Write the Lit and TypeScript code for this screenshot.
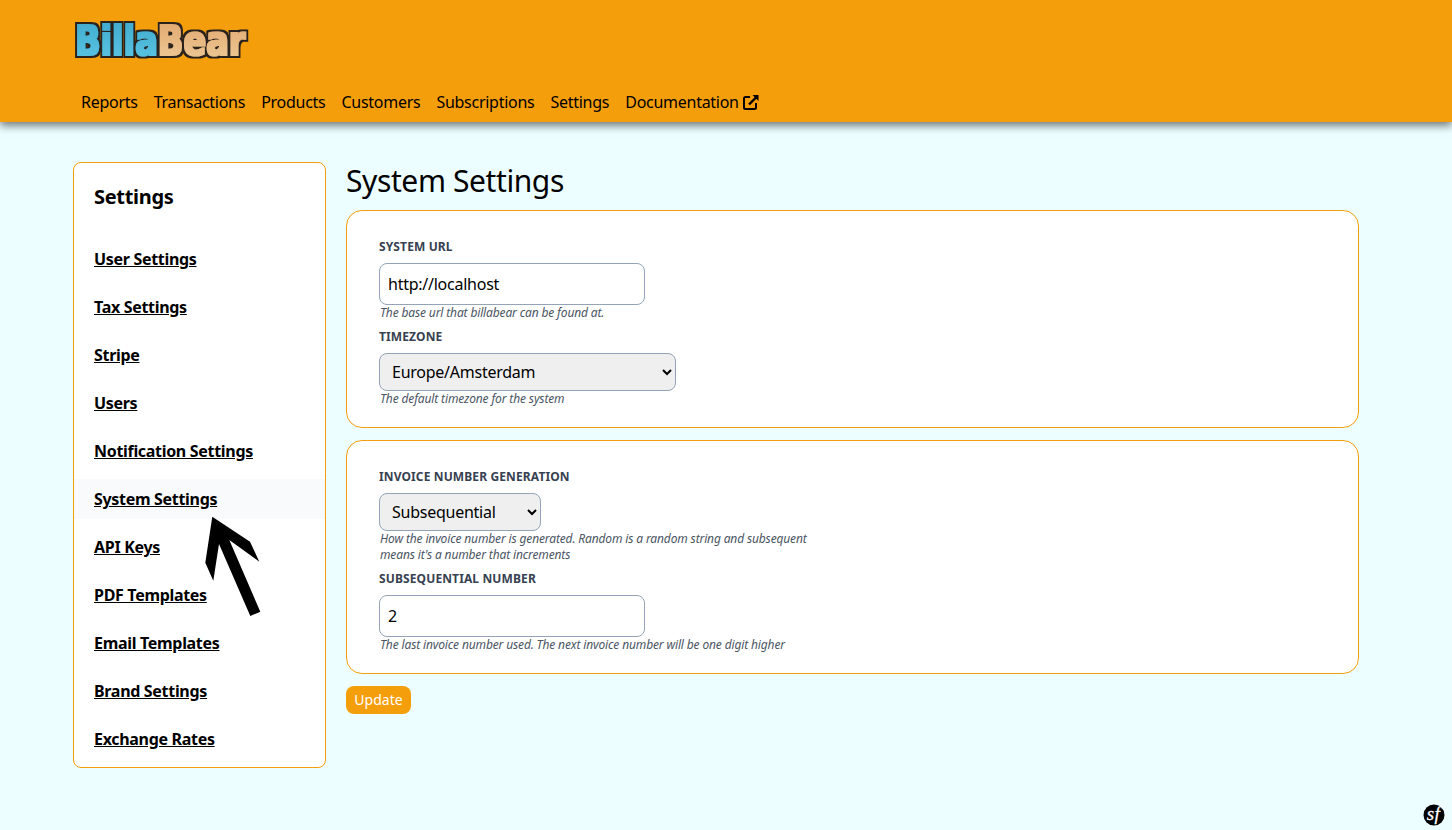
import { LitElement, html, css, svg } from "lit";
import { customElement } from "lit/decorators.js";

const NAV = ["Reports", "Transactions", "Products", "Customers", "Subscriptions", "Settings"];
const MENU = [
  "User Settings",
  "Tax Settings",
  "Stripe",
  "Users",
  "Notification Settings",
  "System Settings",
  "API Keys",
  "PDF Templates",
  "Email Templates",
  "Brand Settings",
  "Exchange Rates",
];

const logo = svg`
  <svg class="logo" width="184" height="50" viewBox="0 0 184 50">
    <defs>
      <linearGradient id="blue" x1="0" y1="0" x2="0" y2="1">
        <stop offset="0" stop-color="#3fa9cc" />
        <stop offset="1" stop-color="#5cc6e4" />
      </linearGradient>
      <linearGradient id="tan" x1="0" y1="0" x2="0" y2="1">
        <stop offset="0" stop-color="#e2a56c" />
        <stop offset="1" stop-color="#edcb98" />
      </linearGradient>
      <filter id="fat" filterUnits="userSpaceOnUse" x="0" y="0" width="184" height="50">
        <feMorphology in="SourceGraphic" operator="dilate" radius="0.6" result="body" />
        <feMorphology in="SourceAlpha" operator="dilate" radius="3" result="wide" />
        <feFlood flood-color="#2a211d" />
        <feComposite in2="wide" operator="in" result="line" />
        <feMerge>
          <feMergeNode in="line" />
          <feMergeNode in="body" />
        </feMerge>
      </filter>
    </defs>
    <g filter="url(#fat)">
      <text class="logo-text" transform="translate(2 39) scale(0.84 1)"><tspan fill="url(#blue)">Billa</tspan><tspan fill="url(#tan)">Bear</tspan></text>
    </g>
  </svg>
`;

@customElement("app-root")
export class AppRoot extends LitElement {
  static styles = css`
    :host {
      display: block;
      position: relative;
      min-height: 100vh;
      background: #ecfeff;
      font-family: "Noto Sans", sans-serif;
      color: #000;
      overflow: hidden;
    }
    .top {
      height: 122px;
      box-sizing: border-box;
      background: #f59e0b;
      padding: 16px 0 0 73px;
      box-shadow: 0 4px 8px 0 rgba(0, 0, 0, 0.5);
    }
    .logo {
      display: block;
    }
    .logo-text {
      font-family: "DejaVu Sans", sans-serif;
      font-weight: 700;
      font-size: 40px;
    }
    nav {
      display: flex;
      align-items: center;
      gap: 16px;
      margin: 24px 0 0 8px;
      font-size: 16px;
      line-height: 24px;
      letter-spacing: -0.27px;
    }
    nav a {
      color: #000;
      text-decoration: none;
      display: flex;
      align-items: center;
      gap: 4px;
    }
    .body {
      display: flex;
      align-items: flex-start;
      gap: 20px;
      padding: 40px 93px 0 73px;
    }
    .side {
      width: 253px;
      height: 606px;
      flex: none;
      box-sizing: border-box;
      background: #fff;
      border: 1px solid #f59e0b;
      border-radius: 8px;
      padding-top: 20px;
    }
    .side h2 {
      margin: 0 0 28px;
      padding-left: 20px;
      font-size: 20px;
      line-height: 28px;
      font-weight: 700;
      letter-spacing: -0.3px;
    }
    .side ul {
      list-style: none;
      margin: 0;
      padding: 0;
      display: flex;
      flex-direction: column;
      gap: 8px;
    }
    .side li {
      height: 40px;
      display: flex;
      align-items: center;
      padding-left: 20px;
      font-size: 16px;
      font-weight: 700;
      letter-spacing: -0.31px;
    }
    .side li.active {
      background: #f9fafb;
    }
    .side a {
      color: #000;
      text-decoration: underline;
    }
    main {
      flex: 1;
      min-width: 0;
    }
    h1 {
      margin: 0 0 10px;
      font-size: 30px;
      line-height: 38px;
      font-weight: 400;
      letter-spacing: -0.4px;
    }
    .card {
      background: #fff;
      border: 1px solid #f59e0b;
      border-radius: 16px;
      box-sizing: border-box;
      padding: 28px 32px 0;
      margin-bottom: 12px;
    }
    .one {
      height: 218px;
    }
    .two {
      height: 234px;
    }
    label {
      display: block;
      font-size: 12px;
      line-height: 16px;
      font-weight: 700;
      color: #374151;
      text-transform: uppercase;
      margin-bottom: 8px;
      letter-spacing: 0.12px;
    }
    input,
    select {
      display: block;
      box-sizing: border-box;
      border: 1px solid #94a3b8;
      border-radius: 8px;
      font-family: inherit;
      font-size: 16px;
      letter-spacing: -0.25px;
      color: #000;
      outline: none;
    }
    input {
      width: 266px;
      height: 42px;
      padding: 0 8px;
      background: #fff;
    }
    select {
      height: 38px;
      padding: 0 8px;
      background-color: #efefef;
    }
    .tz {
      width: 297px;
    }
    .inv {
      width: 162px;
    }
    .hint {
      font-size: 12px;
      line-height: 16px;
      font-style: italic;
      color: #4b5563;
      margin: 0 0 8px;
      padding-left: 1px;
      width: 440px;
      letter-spacing: -0.14px;
    }
    button {
      display: block;
      height: 28px;
      width: 65px;
      padding: 0 0 2px;
      border: 0;
      border-radius: 8px;
      background: #f59e0b;
      color: #fff;
      font-family: inherit;
      font-size: 14px;
    }
    .arrow {
      position: absolute;
      left: 0;
      top: 0;
      pointer-events: none;
    }
    .sf {
      position: absolute;
      left: 1422px;
      top: 803px;
    }
    .sf text {
      font-family: "Liberation Serif", serif;
      font-style: italic;
      font-size: 19px;
      letter-spacing: 0.5px;
    }
  `;

  render() {
    return html`
      <header class="top">
        ${logo}
        <nav>
          ${NAV.map((n) => html`<a href="#">${n}</a>`)}
          <a href="#">Documentation
            <svg width="16" height="16" viewBox="0 0 16 16" fill="none" stroke="#000" stroke-width="2">
              <path d="M7 3H2.5A1.5 1.5 0 0 0 1 4.5v9A1.5 1.5 0 0 0 2.5 15h9a1.5 1.5 0 0 0 1.5-1.5V9" />
              <path d="M6 10.5 14 2.5" stroke-width="2.4" />
              <path d="M9.5 1h6v6z" fill="#000" stroke="none" />
            </svg>
          </a>
        </nav>
      </header>
      <div class="body">
        <aside class="side">
          <h2>Settings</h2>
          <ul>
            ${MENU.map(
              (m) => html`<li class=${m === "System Settings" ? "active" : ""}><a href="#">${m}</a></li>`
            )}
          </ul>
        </aside>
        <main>
          <h1>System Settings</h1>
          <section class="card one">
            <label>System URL</label>
            <input value="http://localhost" />
            <p class="hint">The base url that billabear can be found at.</p>
            <label>Timezone</label>
            <select class="tz"><option>Europe/Amsterdam</option></select>
            <p class="hint">The default timezone for the system</p>
          </section>
          <section class="card two">
            <label>Invoice Number Generation</label>
            <select class="inv"><option>Subsequential</option></select>
            <p class="hint">How the invoice number is generated. Random is a random string and subsequent means it's a number that increments</p>
            <label>Subsequential Number</label>
            <input value="2" />
            <p class="hint">The last invoice number used. The next invoice number will be one digit higher</p>
          </section>
          <button>Update</button>
        </main>
      </div>
      <svg class="arrow" width="300" height="630" viewBox="0 0 300 630">
        <polygon points="212.3,516.7 250,541.7 259.3,561.7 229.3,540 260.3,611.7 250.3,616 219,544 213.3,580.7 205.3,562.7" fill="#000" />
      </svg>
      <svg class="sf" width="24" height="24" viewBox="0 0 24 24">
        <circle cx="12" cy="12" r="10.5" fill="#000" />
        <text x="11.5" y="17" text-anchor="middle" fill="#fff" stroke="#fff" stroke-width="0.3">sf</text>
      </svg>
    `;
  }
}
